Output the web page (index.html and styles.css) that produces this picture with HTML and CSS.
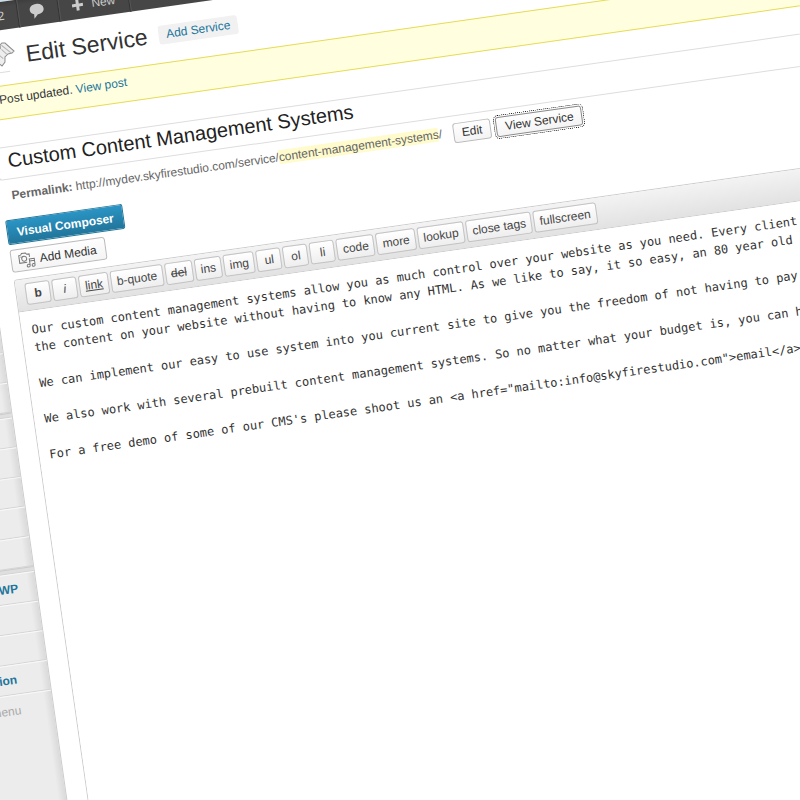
FILE: index.html
```html
<!DOCTYPE html>
<html lang="en">
<head>
    <meta charset="UTF-8">
    <meta name="viewport" content="width=device-width, initial-scale=1.0">
    <title>Edit Service</title>
    <link rel="stylesheet" href="styles.css">
</head>
<body>
    <div class="screen">
        <nav class="adminbar">
            <a class="updates" href="#">2</a>
            <a class="comments" href="#" aria-label="Comments">
                <svg width="16" height="16" viewBox="0 0 16 16"><path d="M8 1C12 1 15 3 15 6.300C15 9.500 12 11.500 8.500 11.500L4.500 15.500L4.800 11C2.500 10.200 1 8.500 1 6.300C1 3 4 1 8 1Z"/></svg>
            </a>
            <a class="new" href="#">
                <svg width="12" height="12" viewBox="0 0 12 12"><path d="M4.500 0.500h3v4h4v3h-4v4h-3v-4h-4v-3h4z"/></svg>
                New
            </a>
            <span class="rest"></span>
        </nav>

        <div class="columns">
            <ul class="menu">
                <li></li>
                <li></li>
                <li></li>
                <li class="separator"></li>
                <li></li>
                <li></li>
                <li></li>
                <li></li>
                <li></li>
                <li class="separator"></li>
                <li><a class="wp" href="#">WP</a></li>
                <li></li>
                <li></li>
                <li><a href="#">ion</a></li>
                <li class="collapse"><button type="button">menu</button></li>
            </ul>

            <main class="content">
                <header class="heading">
                    <svg class="pin" width="34" height="34" viewBox="-26 40 34 34">
                        <path class="pin-body" d="M-6.300 44.500L-4.100 42.800L-1.100 43.300L6.700 52.500L4.400 54.200L0.300 54.600L-3.100 57.100L-3.800 62.100L-7.300 65.600L-19 54L-15 51L-10 51L-6.500 48Z"/>
                        <path class="pin-line" d="M-5 45L3.500 54M-5.500 49L-1 54.500M-10 53L-5 58.500"/>
                        <path class="pin-base" d="M-20 72H0"/>
                    </svg>
                    <h2>Edit Service</h2>
                    <a class="add-new" href="#">Add Service</a>
                </header>

                <div class="notice">Post updated. <a href="#">View post</a></div>

                <input class="title" type="text" aria-label="Title" value="Custom Content Management Systems">

                <div class="permalink">
                    <span class="url"><strong>Permalink:</strong> http://mydev.skyfirestudio.com/service/<mark>content-management-systems</mark>/</span>
                    <button type="button">Edit</button>
                    <button class="focused" type="button">View Service</button>
                </div>

                <button class="composer" type="button">Visual Composer</button>

                <button class="media" type="button">
                    <svg width="18" height="18" viewBox="0 0 18 18">
                        <path d="M1.500 3.500h2l1-1.500h4l1 1.500h2.500v3M9 11.500H1.500v-8M3 5.500h1"/>
                        <circle cx="6.500" cy="7.500" r="2.500"/>
                        <path d="M11.500 14.500v-6h5v5.500M11.500 10.500h5"/>
                        <ellipse cx="10" cy="15" rx="1.500" ry="1.300"/>
                        <ellipse cx="15" cy="15" rx="1.500" ry="1.300"/>
                    </svg>
                    Add Media
                </button>

                <div class="editor">
                    <div class="toolbar">
                        <button type="button"><b>b</b></button>
                        <button type="button"><i>i</i></button>
                        <button type="button"><u>link</u></button>
                        <button type="button">b-quote</button>
                        <button type="button"><del>del</del></button>
                        <button type="button">ins</button>
                        <button type="button">img</button>
                        <button type="button">ul</button>
                        <button type="button">ol</button>
                        <button type="button">li</button>
                        <button type="button">code</button>
                        <button type="button">more</button>
                        <button type="button">lookup</button>
                        <button type="button">close tags</button>
                        <button type="button">fullscreen</button>
                    </div>
                    <textarea aria-label="Content" wrap="off" spellcheck="false">
Our custom content management systems allow you as much control over your website as you need. Every client has
the content on your website without having to know any HTML. As we like to say, it so easy, an 80 year old can

We can implement our easy to use system into you current site to give you the freedom of not having to pay out

We also work with several prebuilt content management systems. So no matter what your budget is, you can have

For a free demo of some of our CMS's please shoot us an &lt;a href="mailto:info@skyfirestudio.com"&gt;email&lt;/a&gt; or</textarea>
                </div>
            </main>
        </div>
    </div>
</body>
</html>
```

FILE: styles.css
```css
* {
    box-sizing: border-box;
}
body {
    margin: 0;
    height: 100vh;
    overflow: hidden;
    background: #fff;
    color: #333;
    font-family: "Liberation Sans", Arial, sans-serif;
    font-size: 12px;
}
a {
    color: #21759b;
    text-decoration: none;
}
button {
    font-family: inherit;
    font-size: 12px;
    color: #333;
    cursor: pointer;
}

/* the whole screen is tilted around the top left corner of the window */
.screen {
    display: flex;
    flex-direction: column;
    width: calc(100vw + 180px);
    height: calc(100vh + 130px);
    margin-left: -160px;
    border-top: 2px solid #c9dcea;
    transform: rotate(-8.1deg);
    transform-origin: 160px 0;
}

/* admin bar */
.adminbar {
    display: flex;
    flex: none;
    height: 28px;
    background: linear-gradient(#3c3c3c, #464646 20%, #464646);
}
.adminbar a,
.adminbar .rest {
    display: flex;
    align-items: center;
    border-right: 1px solid #333;
    border-left: 1px solid #555;
    color: #ccc;
}
.adminbar .rest {
    flex: 1;
}
.adminbar svg {
    fill: #ccc;
}
.adminbar .updates {
    justify-content: flex-end;
    width: 176px;
    padding-right: 13px;
}
.adminbar .comments {
    justify-content: center;
    width: 41px;
    padding-right: 4px;
}
.adminbar .new {
    gap: 8px;
    width: 71px;
    padding-left: 12px;
}

.columns {
    display: flex;
    flex: 1;
}

/* side menu */
.menu {
    flex: none;
    width: 114px;
    margin: 0;
    padding: 290px 0 0;
    list-style: none;
    background: linear-gradient(to left, #dadada, #ececec 8px);
    border-right: 1px solid #ccc;
}
.menu li {
    height: 30px;
    padding-right: 32px;
    border-top: 1px solid #f9f9f9;
    border-bottom: 1px solid #d4d4d4;
    line-height: 28px;
    text-align: right;
    font-weight: bold;
}
.menu .separator {
    height: 5px;
    background: #dfdfdf;
    border-top-color: #ccc;
}
.menu .wp {
    margin-right: -14px;
}
.menu .collapse {
    border-bottom: 0;
    font-weight: normal;
}
.menu button {
    height: 30px;
    padding: 0;
    border: 0;
    background: none;
    color: #aaa;
}

/* page content */
.content {
    display: flex;
    flex: 1;
    flex-direction: column;
    align-items: flex-start;
    padding: 10px 0 0 20px;
}
.heading {
    display: flex;
    align-items: center;
    height: 34px;
}
.pin-body {
    fill: #eee;
    stroke: #8c8c8c;
}
.pin-line {
    fill: none;
    stroke: #b5b5b5;
}
.pin-base {
    stroke: #ddd;
}
.heading h2 {
    margin: 0 11px 0 10px;
    font-size: 23px;
    font-weight: normal;
    line-height: 30px;
}
.add-new {
    padding: 0 8px;
    border-radius: 3px;
    background: #f1f1f1;
    line-height: 19px;
}
.notice {
    width: 100%;
    height: 34px;
    margin-top: 11px;
    padding: 4px 10px;
    border: 1px solid #e6db55;
    background: #ffffe0;
    line-height: 18px;
}
.title {
    width: 100%;
    height: 33px;
    margin-top: 27px;
    padding: 0 10px 4px;
    border: 1px solid #ddd;
    border-radius: 3px;
    color: #222;
    font-family: inherit;
    font-size: 20px;
}

.permalink {
    display: flex;
    align-items: flex-start;
    height: 20px;
    margin-top: 7px;
    padding-left: 10px;
}
.permalink .url {
    margin-right: 11px;
    color: #666;
    line-height: 18px;
    white-space: nowrap;
}
.permalink mark {
    background: #fffbcc;
    color: #666;
}
.permalink button,
.media {
    border: 1px solid #bbb;
    border-radius: 3px;
    background: linear-gradient(#fefefe, #f4f4f4);
}
.permalink button {
    height: 20px;
    margin-right: 5px;
    padding: 0 8px;
    white-space: nowrap;
}
.permalink .focused {
    border-color: #888;
    outline: 1px dotted #111;
    outline-offset: 1px;
}

.composer {
    height: 25px;
    margin-top: 13px;
    padding: 0 9px;
    border: 1px solid #21759b;
    border-radius: 2px;
    background: linear-gradient(#2a95c5, #21759b);
    color: #fff;
    font-weight: bold;
}
.media {
    display: flex;
    align-items: center;
    gap: 4px;
    height: 23px;
    margin-top: 5px;
    padding: 0 9px 0 6px;
}
.media svg {
    fill: none;
    stroke: #777;
}

/* editor */
.editor {
    display: flex;
    flex: 1;
    flex-direction: column;
    width: 100%;
    margin-top: 7px;
    border: 1px solid #ccc;
    border-radius: 3px 3px 0 0;
}
.toolbar {
    display: flex;
    gap: 2px;
    height: 32px;
    padding: 4px 9px;
    border-bottom: 1px solid #ccc;
    background: linear-gradient(#f3f3f3, #e2e2e2);
}
.toolbar button {
    min-width: 25px;
    height: 22px;
    padding: 0 5px;
    border: 1px solid #c3c3c3;
    border-radius: 3px;
    background: linear-gradient(#fff, #eee);
    color: #464646;
    white-space: nowrap;
}
.editor textarea {
    flex: 1;
    width: 100%;
    padding: 10px;
    border: 0;
    outline: 0;
    overflow: hidden;
    resize: none;
    background: #fff;
    color: #333;
    font-family: "DejaVu Sans Mono", Consolas, monospace;
    font-size: 12px;
    line-height: 18px;
}
```
